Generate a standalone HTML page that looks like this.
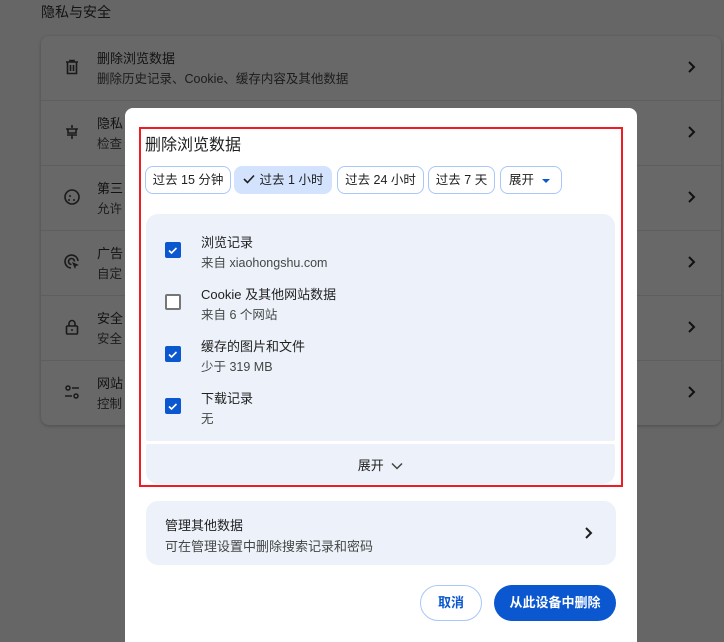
<!DOCTYPE html>
<html><head><meta charset="utf-8"><style>
*{box-sizing:border-box;margin:0;padding:0}
body{width:724px;height:642px;background:#666;font-family:"Liberation Sans","Noto Sans CJK SC",sans-serif;position:relative;overflow:hidden;color:#1f1f1f}
.hd{position:absolute;left:41px;top:2px;font-size:14px;color:#131313}
.card{position:absolute;left:41px;top:36px;width:680px;height:389px;background:#686868;border-radius:8px;box-shadow:0 1px 3px rgba(0,0,0,.25)}
.row{position:absolute;left:0;width:680px;height:65px;border-top:1px solid #5e5e5e}
.row .ic{position:absolute;left:22px;top:22px;width:18px;height:18px}
.row .t1{position:absolute;left:56px;top:12px;font-size:13px;color:#121212}
.row .t2{position:absolute;left:56px;top:32px;font-size:12.5px;color:#1c1c1c}
.row .ch{position:absolute;left:646px;top:24px}
.dlg{position:absolute;left:125px;top:108px;width:512px;height:534px;background:#fff;border-radius:8px 8px 0 0}
.red{position:absolute;left:139px;top:127px;width:484px;height:360px;border:2px solid #ee1c25}
.title{position:absolute;left:145px;top:131px;font-size:16px;color:#1f1f1f}
.chip{position:absolute;top:166px;height:28px;border:1px solid #a8c7fa;border-radius:8px;font-size:12.5px;line-height:26px;text-align:center;white-space:nowrap;color:#1f1f1f;background:#fff}
.chip.sel{background:#d3e3fd;border-color:#d3e3fd}
.panel{position:absolute;left:146px;top:214px;width:469px;height:227px;background:#edf2fa;border-radius:12px 12px 2px 2px}
.exp{position:absolute;left:146px;top:444px;width:469px;height:40px;background:#edf2fa;border-radius:2px 2px 12px 12px;text-align:center;font-size:13px;line-height:44px}
.cb{position:absolute;left:165px;width:16px;height:16px;border-radius:2px;background:#0b57d0}
.cb.off{background:#fff;border:2px solid #747775}
.it1{position:absolute;left:201px;font-size:13px;color:#1f1f1f}
.it2{position:absolute;left:201px;font-size:12.5px;color:#444746}
.mg{position:absolute;left:146px;top:501px;width:470px;height:64px;background:#edf2fa;border-radius:12px}
.btn{position:absolute;top:585px;height:36px;border-radius:18px;font-size:13px;font-weight:bold;text-align:center;line-height:34px}
</style></head><body>
<div class="hd">隐私与安全</div>
<div class="card">
 <div class="row" style="top:0;border-top:none">
  <svg class="ic" viewBox="0 0 18 18"><path d="M3 4h12M7 4V2.5h4V4M4.5 4v11.5h9V4M7.5 7v6M10.5 7v6" stroke="#1a1a1a" stroke-width="1.6" fill="none"/></svg>
  <div class="t1">删除浏览数据</div><div class="t2">删除历史记录、Cookie、缓存内容及其他数据</div>
  <svg class="ch" width="10" height="14"><path d="M2 2l5 5-5 5" stroke="#111" stroke-width="2" fill="none"/></svg></div>
 <div class="row" style="top:64px">
  <svg class="ic" viewBox="0 0 18 18"><path d="M9 2v3M3 6h12M5 6v4h8V6M4 12h10M9 12v4" stroke="#1a1a1a" stroke-width="1.6" fill="none"/></svg>
  <div class="t1">隐私</div><div class="t2">检查</div>
  <svg class="ch" width="10" height="14"><path d="M2 2l5 5-5 5" stroke="#111" stroke-width="2" fill="none"/></svg></div>
 <div class="row" style="top:129px">
  <svg class="ic" viewBox="0 0 18 18"><circle cx="9" cy="9" r="7" stroke="#1a1a1a" stroke-width="1.6" fill="none"/><circle cx="7" cy="8" r="1" fill="#1a1a1a"/><circle cx="11" cy="12" r="1" fill="#1a1a1a"/><circle cx="6" cy="12" r="1" fill="#1a1a1a"/></svg>
  <div class="t1">第三</div><div class="t2">允许</div>
  <svg class="ch" width="10" height="14"><path d="M2 2l5 5-5 5" stroke="#111" stroke-width="2" fill="none"/></svg></div>
 <div class="row" style="top:194px">
  <svg class="ic" viewBox="0 0 18 18"><path d="M15 8A6.5 6.5 0 1 0 8 15" stroke="#1a1a1a" stroke-width="1.6" fill="none"/><path d="M11.5 8.5A3 3 0 1 0 8.5 11.5" stroke="#1a1a1a" stroke-width="1.6" fill="none"/><path d="M9 9l7 3-3 1-1 3z" fill="#1a1a1a"/></svg>
  <div class="t1">广告</div><div class="t2">自定</div>
  <svg class="ch" width="10" height="14"><path d="M2 2l5 5-5 5" stroke="#111" stroke-width="2" fill="none"/></svg></div>
 <div class="row" style="top:259px">
  <svg class="ic" viewBox="0 0 18 18"><rect x="3.5" y="8" width="11" height="8" rx="1" stroke="#1a1a1a" stroke-width="1.6" fill="none"/><path d="M6 8V5.5a3 3 0 0 1 6 0V8" stroke="#1a1a1a" stroke-width="1.6" fill="none"/><circle cx="9" cy="12" r="1" fill="#1a1a1a"/></svg>
  <div class="t1">安全</div><div class="t2">安全</div>
  <svg class="ch" width="10" height="14"><path d="M2 2l5 5-5 5" stroke="#111" stroke-width="2" fill="none"/></svg></div>
 <div class="row" style="top:324px">
  <svg class="ic" viewBox="0 0 18 18"><circle cx="5" cy="5" r="2" stroke="#1a1a1a" stroke-width="1.5" fill="none"/><path d="M9 5h7M2 13h7" stroke="#1a1a1a" stroke-width="1.6"/><circle cx="13" cy="13" r="2" stroke="#1a1a1a" stroke-width="1.5" fill="none"/></svg>
  <div class="t1">网站</div><div class="t2">控制</div>
  <svg class="ch" width="10" height="14"><path d="M2 2l5 5-5 5" stroke="#111" stroke-width="2" fill="none"/></svg></div>
</div>

<div class="dlg"></div>
<div class="title">删除浏览数据</div>
<div class="chip" style="left:145px;width:86px">过去 15 分钟</div>
<div class="chip sel" style="left:234px;width:98px"><svg width="12" height="10" style="margin-right:5px"><path d="M1 5l3.5 3.5L11 1.5" stroke="#1f1f1f" stroke-width="1.6" fill="none"/></svg>过去 1 小时</div>
<div class="chip" style="left:337px;width:87px">过去 24 小时</div>
<div class="chip" style="left:428px;width:67px">过去 7 天</div>
<div class="chip" style="left:500px;width:62px;text-align:left;padding-left:8px">展开<svg width="10" height="6" style="position:absolute;left:40px;top:11px"><path d="M1 1h8L5 5z" fill="#0b57d0"/></svg></div>

<div class="panel"></div>
<div class="cb" style="top:242px"><svg width="16" height="16"><path d="M4 8.5l2.5 2.5 5-5" stroke="#fff" stroke-width="1.6" fill="none"/></svg></div>
<div class="it1" style="top:232px">浏览记录</div><div class="it2" style="top:252px">来自 xiaohongshu.com</div>
<div class="cb off" style="top:294px"></div>
<div class="it1" style="top:284px">Cookie 及其他网站数据</div><div class="it2" style="top:304px">来自 6 个网站</div>
<div class="cb" style="top:346px"><svg width="16" height="16"><path d="M4 8.5l2.5 2.5 5-5" stroke="#fff" stroke-width="1.6" fill="none"/></svg></div>
<div class="it1" style="top:336px">缓存的图片和文件</div><div class="it2" style="top:356px">少于 319 MB</div>
<div class="cb" style="top:398px"><svg width="16" height="16"><path d="M4 8.5l2.5 2.5 5-5" stroke="#fff" stroke-width="1.6" fill="none"/></svg></div>
<div class="it1" style="top:388px">下载记录</div><div class="it2" style="top:408px">无</div>
<div class="exp">展开 <svg width="12" height="8" style="margin-left:4px"><path d="M1 1.5l5 5 5-5" stroke="#444" stroke-width="1.5" fill="none"/></svg></div>
<div class="red"></div>

<div class="mg">
 <div style="position:absolute;left:19px;top:14px;font-size:13px">管理其他数据</div>
 <div style="position:absolute;left:19px;top:35px;font-size:13px;color:#444746">可在管理设置中删除搜索记录和密码</div>
 <svg style="position:absolute;left:438px;top:25px" width="10" height="14"><path d="M2 2l5 5-5 5" stroke="#1f1f1f" stroke-width="2" fill="none"/></svg>
</div>
<div class="btn" style="left:420px;width:62px;border:1px solid #a8c7fa;color:#0b57d0;background:#fff">取消</div>
<div class="btn" style="left:494px;width:122px;background:#0b57d0;color:#fff;line-height:36px">从此设备中删除</div>
</body></html>
